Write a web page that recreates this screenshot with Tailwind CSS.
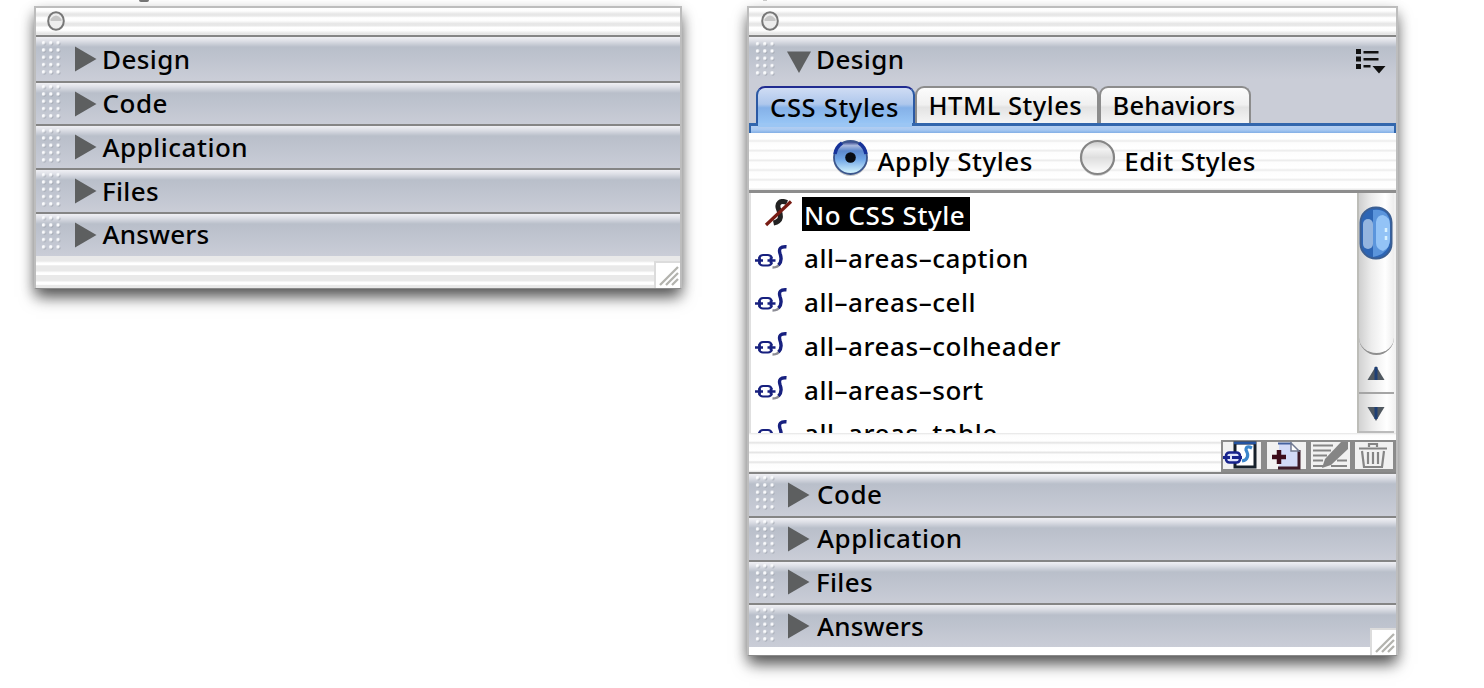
<!DOCTYPE html>
<html lang="en">
<head>
<meta charset="utf-8">
<title>Panel groups</title>
<script src="https://cdn.jsdelivr.net/npm/@tailwindcss/browser@4"></script>
</head>
<body class="bg-white w-[1484px] h-[688px] overflow-hidden relative text-black text-[26px] leading-[36px] font-medium font-['Noto_Sans','Open_Sans',sans-serif]">

<svg class="absolute w-0 h-0">
  <defs>
    <pattern id="dots" width="7.3" height="7.3" patternUnits="userSpaceOnUse">
      <circle cx="3.4" cy="3.6" r="1.6" fill="#9da3ad"/>
      <circle cx="2.5" cy="2.7" r="1.7" fill="#fafbfd"/>
    </pattern>
    <linearGradient id="blueBall" x1="0" y1="0" x2="0" y2="1">
      <stop offset="0" stop-color="#1a2a78"/><stop offset=".14" stop-color="#a9b9de"/><stop offset=".3" stop-color="#5d88cc"/><stop offset=".55" stop-color="#6fa5e6"/><stop offset="1" stop-color="#dcfaff"/>
    </linearGradient>
    <linearGradient id="greyBall" x1="0" y1="0" x2="0" y2="1">
      <stop offset="0" stop-color="#c8c8c8"/><stop offset=".25" stop-color="#f2f2f2"/><stop offset=".5" stop-color="#dedede"/><stop offset="1" stop-color="#ffffff"/>
    </linearGradient>
  </defs>
  <symbol id="grip" viewBox="0 0 22 37"><rect width="21.5" height="36.5" fill="url(#dots)"/></symbol>
  <symbol id="right" viewBox="0 0 22 26"><path d="M0 .5 21.5 13 0 25.5z" fill="#5d5f60"/></symbol>
  <symbol id="ring" viewBox="0 0 20 22">
    <ellipse cx="10" cy="11" rx="7.8" ry="8.8" fill="#ededed" stroke="#777" stroke-width="2"/>
    <path d="M4.500 9q5.500-7 11 0v2h-11z" fill="#c6c6c6"/>
  </symbol>
  <symbol id="resize" viewBox="0 0 26 27">
    <path d="M0 0h26v27H0z" fill="#fff"/><path d="M1 27V1h25" fill="none" stroke="#dcdcdc" stroke-width="2"/>
    <path d="M6 24 24 6M12 24 24 12M18 24 24 18" stroke="#b3b3ae" stroke-width="2.300"/>
  </symbol>
  <symbol id="linkcss" viewBox="0 0 34 26">
    <path d="M4 13.500q1-3.500 4-3.500h5q3 0 4 3.500M4 17.500q1 3 4 3h5q3 0 4-3" fill="none" stroke="#17207f" stroke-width="2.200"/>
    <path d="M0 15.500h8M12.500 15.500h8" stroke="#17207f" stroke-width="2.600"/>
    <path d="M4.500 12.500v6M16 12.500v6" stroke="#17207f" stroke-width="2.800"/>
    <path d="M17.500 22.500q6 0 7-4" fill="none" stroke="#8c8c95" stroke-width="2.400"/>
    <path d="M31.500 1.800c-6-.5-8 2-6.500 6.700 1.700 4.500 2 8-1.500 11.500" fill="none" stroke="#17207f" stroke-width="3.400"/>
  </symbol>
</svg>

<!-- tails of the caption line above the panels -->
<div class="absolute top-0 left-[139px] w-[10px] h-[2px] rounded-b-full bg-[#777]"></div>
<div class="absolute top-0 left-[763px] w-[4px] h-px bg-[#ccc]"></div>

<div class="flex items-start pt-[6px] pl-[33.500px] gap-[65px]">

  <!-- collapsed panel group -->
  <section class="w-[648.500px] h-[283px] flex flex-col relative border-2 border-b border-[#bdbdbd] border-b-[#8a8a8a] bg-white shadow-[0_10px_15px_-2px_rgba(0,0,0,0.580),0_5px_12px_rgba(0,0,0,0.240)]">
    <header class="h-[26.500px] pl-[10px] bg-[repeating-linear-gradient(#ffffff_0px,#fdfdfd_3px,#e6e6e6_6px,#e9e9e9_8px,#ffffff_9.700px)]">
      <svg class="w-5 h-[22px] mt-[2px]"><use href="#ring"/></svg>
    </header>
    <div class="h-[46.300px] flex items-center border-t-2 border-[#858585] bg-[linear-gradient(#f0f0f4_0px,#dddfe6_4px,#b9bfca_10px,#bfc4cf_22px,#cacdd7_42px)]">
      <svg class="w-[22px] h-[37px] ml-[5px]"><use href="#grip"/></svg><svg class="w-[22px] h-[26px] ml-[12px]"><use href="#right"/></svg><span class="ml-[5.500px] tracking-[0.400px]">Design</span>
    </div>
    <div class="h-[43.700px] flex items-center border-t-2 border-[#858585] bg-[linear-gradient(#f0f0f4_0px,#dddfe6_4px,#b9bfca_10px,#bfc4cf_22px,#cacdd7_42px)]">
      <svg class="w-[22px] h-[37px] ml-[5px] -mt-[2px]"><use href="#grip"/></svg><svg class="w-[22px] h-[26px] ml-[12px]"><use href="#right"/></svg><span class="ml-[6px] -mt-px tracking-[0.500px]">Code</span>
    </div>
    <div class="h-[43.700px] flex items-center border-t-2 border-[#858585] bg-[linear-gradient(#f0f0f4_0px,#dddfe6_4px,#b9bfca_10px,#bfc4cf_22px,#cacdd7_42px)]">
      <svg class="w-[22px] h-[37px] ml-[5px] -mt-[2px]"><use href="#grip"/></svg><svg class="w-[22px] h-[26px] ml-[12px]"><use href="#right"/></svg><span class="ml-[6px] -mt-px tracking-[0.500px]">Application</span>
    </div>
    <div class="h-[43.700px] flex items-center border-t-2 border-[#858585] bg-[linear-gradient(#f0f0f4_0px,#dddfe6_4px,#b9bfca_10px,#bfc4cf_22px,#cacdd7_42px)]">
      <svg class="w-[22px] h-[37px] ml-[5px] -mt-[2px]"><use href="#grip"/></svg><svg class="w-[22px] h-[26px] ml-[12px]"><use href="#right"/></svg><span class="ml-[5.500px] -mt-px tracking-[0.300px]">Files</span>
    </div>
    <div class="h-[43.700px] flex items-center border-t-2 border-[#858585] bg-[linear-gradient(#f0f0f4_0px,#dddfe6_4px,#b9bfca_10px,#bfc4cf_22px,#cacdd7_42px)]">
      <svg class="w-[22px] h-[37px] ml-[5px] -mt-[2px]"><use href="#grip"/></svg><svg class="w-[22px] h-[26px] ml-[12px]"><use href="#right"/></svg><span class="ml-[6px] -mt-px tracking-[0.200px]">Answers</span>
    </div>
    <footer class="flex-1 bg-[repeating-linear-gradient(#e9e9e9_0px,#e9e9e9_5px,#ffffff_7px,#ffffff_9px,#e9e9e9_9.700px)]"></footer>
    <svg class="absolute right-0 bottom-0 w-[26px] h-[27px]"><use href="#resize"/></svg>
  </section>

  <!-- expanded panel group -->
  <section class="w-[650.500px] h-[650px] flex flex-col relative border-2 border-b border-[#bdbdbd] border-b-[#8a8a8a] bg-white shadow-[0_10px_15px_-2px_rgba(0,0,0,0.580),0_5px_12px_rgba(0,0,0,0.240)]">
    <header class="h-[27px] shrink-0 pl-[11px] bg-[repeating-linear-gradient(#ffffff_0px,#fdfdfd_3px,#e6e6e6_6px,#e9e9e9_8px,#ffffff_9.700px)]">
      <svg class="w-5 h-[22px] mt-[2px]"><use href="#ring"/></svg>
    </header>

    <div class="h-[88px] shrink-0 flex flex-col justify-between border-t-2 border-[#858585] bg-[linear-gradient(#f0f0f4_0px,#dddfe6_4px,#b9bfca_10px,#bfc4cf_22px,#cacdd7_42px)]">
      <div class="h-[44px] flex items-center">
        <svg class="w-[22px] h-[37px] ml-[6px]"><use href="#grip"/></svg>
        <svg class="w-[24px] h-[23px] ml-[10px] mt-[6px]" viewBox="0 0 24 23"><path d="M0 .5h24L12 22z" fill="#5d5f60"/></svg>
        <span class="ml-[5px] tracking-[0.400px]">Design</span>
        <svg class="w-[32px] h-[26px] ml-auto mr-[9px] mt-[4px]" viewBox="0 0 32 26">
          <path d="M1 1h5v5H1zM1 8.500h5v5H1zM1 16h5v5H1zM8.500 3h15v2.500h-15zM8.500 10h15v2.500h-15zM8.500 17h7v2.500h-7zM17.500 18h13L24 25.500z" fill="#111"/>
        </svg>
      </div>
      <nav class="h-[37px] flex pl-[7px] text-[25.500px] leading-[35px]">
        <div class="w-[158.500px] h-[38px] pl-[12px] pt-[2px] leading-[34px] rounded-t-[9px] border-[2.500px] border-b-0 border-[#202b90] border-x-[#2b59a4] bg-[linear-gradient(#cfdcf4,#aec7ec_45%,#85b1e8_55%,#98c6f6)] tracking-[0.700px] whitespace-nowrap">CSS Styles</div>
        <div class="w-[184.500px] pl-[12px] rounded-t-[9px] border-2 border-b-0 border-[#8c8c8c] bg-[linear-gradient(#fcfcfc,#f0f0f0_48%,#e3e3e3_55%,#f5f5f5)] tracking-[0.500px] whitespace-nowrap">HTML Styles</div>
        <div class="w-[152px] pl-[11.500px] rounded-t-[9px] border-2 border-b-0 border-[#8c8c8c] bg-[linear-gradient(#fcfcfc,#f0f0f0_48%,#e3e3e3_55%,#f5f5f5)] tracking-[0.200px] whitespace-nowrap">Behaviors</div>
      </nav>
    </div>
    <div class="h-[9.500px] shrink-0 relative border-t-[3px] border-x-2 border-[#3367ad] bg-[linear-gradient(#b7d0f1,#a8c9f2_55%,#82aee5)]">
      <div class="absolute -top-[3px] left-[7px] w-[154px] h-[4px] bg-[#9bc6f4]"></div>
    </div>

    <div class="h-[57px] shrink-0 flex items-center pl-[83px] bg-[repeating-linear-gradient(#fdfdfd_0px,#ffffff_6px,#ececec_8px,#fdfdfd_9.700px)]">
      <svg class="w-[37px] h-[38px] -mt-[7px]" viewBox="0 0 37 38">
        <circle cx="18.500" cy="20" r="17" fill="#c9c9c9"/><circle cx="18.500" cy="18.500" r="16.500" fill="url(#blueBall)" stroke="#3c568d" stroke-width="1.800"/>
        <path d="M3 15a16 16 0 0 1 7-11M34 15A16 16 0 0 0 27 4" fill="none" stroke="#17339a" stroke-width="3.500"/><circle cx="18.500" cy="18.500" r="5.300" fill="#080c14"/>
      </svg>
      <span class="ml-[8.500px] tracking-[0.500px]">Apply Styles</span>
      <svg class="w-[37px] h-[38px] -mt-[7px] ml-[46px]" viewBox="0 0 37 38">
        <circle cx="18.500" cy="20" r="17" fill="#cfcfcf"/><circle cx="18.500" cy="18.500" r="16.500" fill="url(#greyBall)" stroke="#858585" stroke-width="2.200"/>
      </svg>
      <span class="ml-[8.500px] tracking-[0.400px]">Edit Styles</span>
    </div>

    <div class="h-[243.500px] shrink-0 flex border-t-[3px] border-[#8d8d8d] overflow-hidden bg-white">
      <ul class="flex-1 border-l-2 border-[#e0e0e0] tracking-[0.550px]">
        <li class="h-[43.800px] flex items-center">
          <svg class="w-[29px] h-[28px] ml-[13px] -mt-[3px]" viewBox="0 0 29 28">
            <path d="M23 3.500c-7-3-10.500 1-8.500 6.500 2.500 6 4 12-5 14" fill="none" stroke="#222" stroke-width="5"/><path d="M2 26 27 2.500" stroke="#781c14" stroke-width="3.200"/>
          </svg>
          <span class="ml-[9px] h-[34px] leading-[36px] pl-[2px] w-[168px] bg-black text-white whitespace-nowrap">No CSS Style</span>
        </li>
        <li class="h-[43.800px] flex items-center"><svg class="w-[34px] h-[26px] ml-[4px] -mt-px"><use href="#linkcss"/></svg><span class="ml-[15px]">all–areas–caption</span></li>
        <li class="h-[43.800px] flex items-center"><svg class="w-[34px] h-[26px] ml-[4px] -mt-px"><use href="#linkcss"/></svg><span class="ml-[15px]">all–areas–cell</span></li>
        <li class="h-[43.800px] flex items-center"><svg class="w-[34px] h-[26px] ml-[4px] -mt-px"><use href="#linkcss"/></svg><span class="ml-[15px]">all–areas–colheader</span></li>
        <li class="h-[43.800px] flex items-center"><svg class="w-[34px] h-[26px] ml-[4px] -mt-px"><use href="#linkcss"/></svg><span class="ml-[15px]">all–areas–sort</span></li>
        <li class="h-[43.800px] flex items-center"><svg class="w-[34px] h-[26px] ml-[4px] -mt-px"><use href="#linkcss"/></svg><span class="ml-[15px]">all–areas–table</span></li>
      </ul>
      <div class="w-[39px] pr-[2px] flex flex-col items-center border-l-2 border-[#bdbdb8] bg-[linear-gradient(90deg,#d2d2d2,#ececec_35%,#ffffff_75%,#f0f0f0)]">
        <div class="w-full h-[162px] pt-[13px] rounded-b-[18px] border-b-2 border-[#8f8f8f] bg-[linear-gradient(90deg,#cfcfcf,#ececec_35%,#ffffff_75%,#ededed)]">
          <svg class="w-[34px] h-[54px]" viewBox="0 0 34 54">
            <rect x="1.500" y="1.500" width="31" height="51" rx="15" fill="#2d65b4" stroke="#3c5f92" stroke-width="2"/>
            <path d="M14 4q16-2 17 14v16q-1 14-17 17z" fill="#5b95dc"/>
            <rect x="4" y="13" width="10" height="30" rx="5" fill="#94b5df"/>
            <path d="M17 16q1-7 7-7 7 2 7 10v14q0 9-7 12-7-2-7-8z" fill="#93c3f6"/>
            <path d="M27 22v4M27 30v4" stroke="#d9f2ff" stroke-width="2.500"/>
          </svg>
        </div>
        <svg class="w-full h-[78px]" viewBox="0 1 35 78">
          <path d="M17 12 25.500 26h-17z" fill="#505860"/><path d="M17 13v13" stroke="#1e3f75" stroke-width="3"/>
          <path d="M0 39h35" stroke="#a5a5a5" stroke-width="2"/>
          <path d="M8.500 53h17L17 67z" fill="#505860"/><path d="M17 53v12" stroke="#1e3f75" stroke-width="3"/>
          <path d="M0 78h35" stroke="#bbb" stroke-width="2"/>
        </svg>
      </div>
    </div>

    <div class="h-[39px] shrink-0 flex justify-end items-end bg-[repeating-linear-gradient(#e4e4e4_0px,#fdfdfd_2px,#ffffff_8px,#e4e4e4_9.700px)]">
      <svg class="w-[175px] h-[32px]" viewBox="0 0 175 32">
        <path d="M0 0h175v32H0z" fill="#8b8b8b"/>
        <path d="M2 2h38v27H2zM46 2h39v27H46zM90 2h39v27H90zM134 2h38v27h-38z" fill="#f1f1f1"/>
        <path d="M14 3h20v24H14z" fill="#fff" stroke="#16202b" stroke-width="3"/><path d="M13 3h22" stroke="#2453a0" stroke-width="2.500"/>
        <path d="M31 8q-6-3-6 2c3 5 2 10-4 11" fill="none" stroke="#3a86cc" stroke-width="3.200"/>
        <rect x="5" y="12.500" width="14" height="10" rx="3.500" fill="#dfe3fa" stroke="#18248d" stroke-width="2.600"/><path d="M2 17.500h7M11 17.500h10" stroke="#18248d" stroke-width="3"/>
        <path d="M58 3.500h13l7 7V28H58z" fill="#d2daf7"/><path d="M57 3.500h14" stroke="#44619f" stroke-width="2"/><path d="M78 10v18H57" fill="none" stroke="#3c1a28" stroke-width="3"/><path d="M70 3v8h8z" fill="#fff" stroke="#727a90" stroke-width="1.500"/>
        <path d="M51 17h14M58 10v14" stroke="#3d0c1a" stroke-width="4.500"/>
        <path d="M92 5.500h20M92 10.500h18M92 15.500h14M92 20.500h10M92 26h10M110 26h16M116 20.500h10" stroke="#858585" stroke-width="2.200"/>
        <path d="M127 2v7l-17 16-9 3 3-9 16-17z" fill="#858585"/>
        <path d="M138 8.500h28M148 7V4h8v3M141 11l2 16h18l2-16M147 12v12M152 12v12M157 12v12" fill="none" stroke="#858585" stroke-width="2.200"/>
      </svg>
    </div>

    <div class="h-[43.800px] shrink-0 flex items-center border-t-2 border-[#858585] bg-[linear-gradient(#f0f0f4_0px,#dddfe6_4px,#b9bfca_10px,#bfc4cf_22px,#cacdd7_42px)]">
      <svg class="w-[22px] h-[37px] ml-[6px] -mt-[2px]"><use href="#grip"/></svg><svg class="w-[22px] h-[26px] ml-[11px]"><use href="#right"/></svg><span class="ml-[7px] -mt-px tracking-[0.500px]">Code</span>
    </div>
    <div class="h-[43.800px] shrink-0 flex items-center border-t-2 border-[#858585] bg-[linear-gradient(#f0f0f4_0px,#dddfe6_4px,#b9bfca_10px,#bfc4cf_22px,#cacdd7_42px)]">
      <svg class="w-[22px] h-[37px] ml-[6px] -mt-[2px]"><use href="#grip"/></svg><svg class="w-[22px] h-[26px] ml-[11px]"><use href="#right"/></svg><span class="ml-[7px] -mt-px tracking-[0.500px]">Application</span>
    </div>
    <div class="h-[43.800px] shrink-0 flex items-center border-t-2 border-[#858585] bg-[linear-gradient(#f0f0f4_0px,#dddfe6_4px,#b9bfca_10px,#bfc4cf_22px,#cacdd7_42px)]">
      <svg class="w-[22px] h-[37px] ml-[6px] -mt-[2px]"><use href="#grip"/></svg><svg class="w-[22px] h-[26px] ml-[11px]"><use href="#right"/></svg><span class="ml-[6px] tracking-[0.300px]">Files</span>
    </div>
    <div class="h-[43.800px] shrink-0 flex items-center border-t-2 border-[#858585] bg-[linear-gradient(#f0f0f4_0px,#dddfe6_4px,#b9bfca_10px,#bfc4cf_22px,#cacdd7_42px)]">
      <svg class="w-[22px] h-[37px] ml-[6px] -mt-[2px]"><use href="#grip"/></svg><svg class="w-[22px] h-[26px] ml-[11px]"><use href="#right"/></svg><span class="ml-[7px] tracking-[0.200px]">Answers</span>
    </div>
    <svg class="absolute right-0 bottom-0 w-[26px] h-[27px]"><use href="#resize"/></svg>
  </section>
</div>
</body>
</html>
